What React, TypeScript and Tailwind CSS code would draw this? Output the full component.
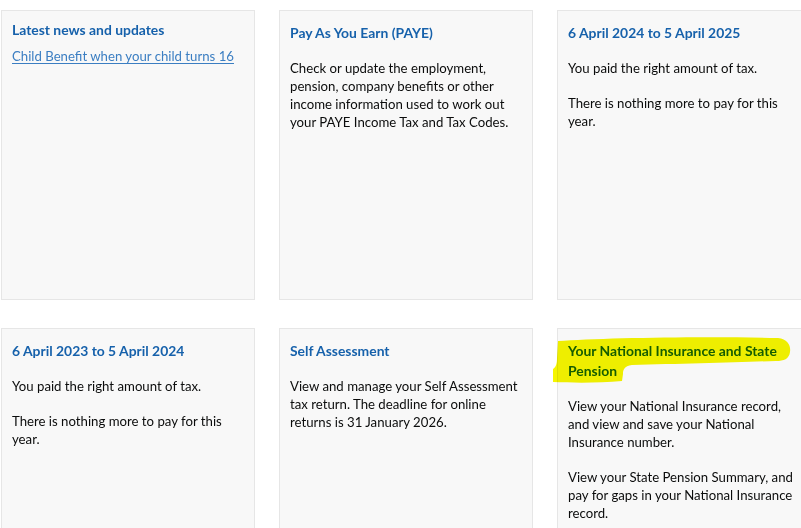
import React from "react";

const font = { fontFamily: "Lato, 'Liberation Sans', Arial, sans-serif" };

function Card({ children, pt = "pt-[12px]" }: { children: React.ReactNode; pt?: string }) {
  return (
    <div className={`h-[290px] border border-[#e6e6e6] bg-[#f8f8f8] px-[10px] ${pt}`}>{children}</div>
  );
}

function H({ children }: { children: React.ReactNode }) {
  return <h2 className="text-[13.9px] leading-[20px] font-bold text-[#1661ab]">{children}</h2>;
}

function P({ children, first = false }: { children: React.ReactNode; first?: boolean }) {
  return (
    <p className={`text-[13.2px] leading-[18px] text-[#0b0c0c] ${first ? "mt-[16px]" : "mt-[17px]"}`}>{children}</p>
  );
}

export default function App() {
  return (
    <div className="relative w-[801px] h-[528px] overflow-hidden bg-white" style={font}>
      <div className="grid grid-cols-[254px_254px_254px] gap-x-[24px] gap-y-[28px] pt-[10px] pl-[1px]">
        <Card pt="pt-[9px]">
          <H>Latest news and updates</H>
          <a href="#" className="mt-[7px] block text-[13.2px] leading-[18px] text-[#3b7ec2] underline underline-offset-2">
            Child Benefit when your child turns 16
          </a>
        </Card>
        <Card>
          <H>Pay As You Earn (PAYE)</H>
          <P first>
            Check or update the employment, pension, company benefits or other income information used to work out
            your PAYE Income Tax and Tax Codes.
          </P>
        </Card>
        <Card>
          <H>6 April 2024 to 5 April 2025</H>
          <P first>You paid the right amount of tax.</P>
          <P>There is nothing more to pay for this year.</P>
        </Card>
        <Card>
          <H>6 April 2023 to 5 April 2024</H>
          <P first>You paid the right amount of tax.</P>
          <P>There is nothing more to pay for this year.</P>
        </Card>
        <Card>
          <H>Self Assessment</H>
          <P first>
            View and manage your Self Assessment tax return. The deadline for online returns is 31 January 2026.
          </P>
        </Card>
        <Card>
          <H>Your National Insurance and State Pension</H>
          <P first>View your National Insurance record, and view and save your National Insurance number.</P>
          <P>View your State Pension Summary, and pay for gaps in your National Insurance record.</P>
        </Card>
      </div>
      <svg className="pointer-events-none absolute left-0 top-0 mix-blend-multiply" width="801" height="528">
        <path
          d="M558 341 C600 338 700 336 778 338 C788 339 791 346 790 352 C789 359 784 361 776 361 C740 362 680 364 632 365 C624 366 623 370 623 374 L622 381 C600 383 575 383 553 382 L553 369 C556 367 557 364 557 358 Z"
          fill="#f5f500"
        />
      </svg>
    </div>
  );
}
